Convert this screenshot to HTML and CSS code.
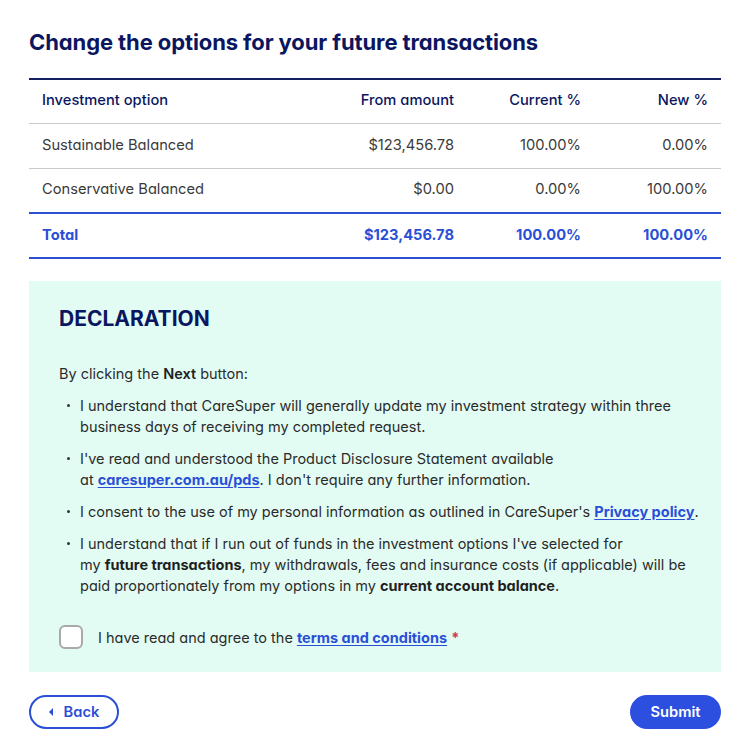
FILE: index.html
```html
<!DOCTYPE html>
<html>
<head>
<meta charset="utf-8">
<link rel="stylesheet" href="styles.css">
</head>
<body>
<div class="page">
  <h1 class="title">Change the options for your future transactions</h1>
  <table class="options">
    <thead>
      <tr>
        <th class="col-name">Investment option</th>
        <th class="num">From amount</th>
        <th class="num">Current %</th>
        <th class="num">New %</th>
      </tr>
    </thead>
    <tbody>
      <tr>
        <td>Sustainable Balanced</td>
        <td class="num">$123,456.78</td>
        <td class="num">100.00%</td>
        <td class="num">0.00%</td>
      </tr>
      <tr>
        <td>Conservative Balanced</td>
        <td class="num">$0.00</td>
        <td class="num">0.00%</td>
        <td class="num">100.00%</td>
      </tr>
    </tbody>
    <tfoot>
      <tr>
        <td>Total</td>
        <td class="num">$123,456.78</td>
        <td class="num">100.00%</td>
        <td class="num">100.00%</td>
      </tr>
    </tfoot>
  </table>

  <section class="declaration">
    <h2 class="decl-title">DECLARATION</h2>
    <p class="intro">By clicking the <strong>Next</strong> button:</p>
    <ul class="points">
      <li>I understand that CareSuper will generally update my investment strategy within three<br>business days of receiving my completed request.</li>
      <li>I've read and understood the Product Disclosure Statement available<br>at <a href="#">caresuper.com.au/pds</a>. I don't require any further information.</li>
      <li>I consent to the use of my personal information as outlined in CareSuper's <a href="#">Privacy policy</a>.</li>
      <li>I understand that if I run out of funds in the investment options I've selected for<br>my <strong>future transactions</strong>, my withdrawals, fees and insurance costs (if applicable) will be<br>paid proportionately from my options in my <strong>current account balance</strong>.</li>
    </ul>
    <label class="agree">
      <span class="box"></span>
      <span class="agree-text">I have read and agree to the <a href="#">terms and conditions</a> <span class="req">*</span></span>
    </label>
  </section>

  <div class="actions">
    <button class="btn btn-back"><span class="tri"></span>Back</button>
    <button class="btn btn-submit">Submit</button>
  </div>
</div>
</body>
</html>
```
FILE: styles.css
```css
* { box-sizing: border-box; }
body {
  margin: 0;
  background: #ffffff;
  font-family: Inter, "Noto Sans", sans-serif;
  font-feature-settings: "cv11" 1;
  color: #2b2b2b;
}
.page {
  padding: 27px 29px 0 29px;
}
.title {
  margin: 0;
  font-size: 22px;
  line-height: 30px;
  font-weight: 700;
  color: #0b1660;
  letter-spacing: -0.1px;
}
.options {
  width: 100%;
  margin-top: 21px;
  border-collapse: collapse;
  font-size: 14.7px;
  border-top: 2px solid #142062;
}
.options th, .options td {
  height: 45px;
  padding: 0 13px;
  text-align: left;
  vertical-align: middle;
}
.options th {
  height: 44px;
  padding-bottom: 2px;
  font-weight: 500;
  color: #0b1660;
  border-bottom: 1px solid #c9c9c9;
}
.options td { color: #3a3a3a; padding-bottom: 2px; }
.options tbody tr td { border-bottom: 1px solid #c9c9c9; }
.options tbody tr:last-child td { border-bottom: 2px solid #2c4fd0; }
.options tfoot td {
  color: #2a4fd6;
  font-weight: 700;
  border-bottom: 2px solid #2c4fd0;
  height: 45px;
}
.options .num { text-align: right; width: 127px; }
.options .col-name { width: auto; }

.declaration {
  margin-top: 22px;
  background: #e2fcf4;
  padding: 24px 30px 23px 30px;
}
.decl-title {
  margin: 0;
  font-size: 21px;
  line-height: 28px;
  font-weight: 700;
  color: #0b1660;
}
.intro {
  margin: 30px 0 0 0;
  font-size: 14.5px;
  line-height: 21px;
}
.intro strong { font-weight: 600; color: #1f1f1f; }
.points {
  list-style: none;
  margin: 11px 0 0 0;
  padding: 0 0 0 21px;
  font-size: 14.5px;
  line-height: 21px;
  white-space: nowrap;
}
.points li {
  position: relative;
  margin-bottom: 11px;
}
.points li:last-child { margin-bottom: 0; }
.points li::before {
  content: "";
  position: absolute;
  left: -13px;
  top: 9px;
  width: 3px;
  height: 3px;
  border-radius: 50%;
  background: #333;
}
.points strong { font-weight: 700; color: #1f1f1f; }
a {
  color: #2a4fd6;
  font-weight: 700;
  text-decoration: underline;
  text-underline-offset: 2px;
}
.agree {
  display: flex;
  align-items: center;
  gap: 15px;
  margin-top: 29px;
  font-size: 14.5px;
}
.box {
  width: 24px;
  height: 24px;
  border: 2px solid #a9a9a9;
  border-radius: 6px;
  background: #fff;
  flex: none;
}
.req { color: #d6355b; font-weight: 700; }

.actions {
  display: flex;
  justify-content: space-between;
  align-items: center;
  margin-top: 23px;
}
.btn {
  font-family: Inter, "Noto Sans", sans-serif;
  font-feature-settings: "cv11" 1;
  height: 34px;
  border-radius: 17px;
  font-size: 14.7px;
  font-weight: 600;
  display: inline-flex;
  align-items: center;
  justify-content: center;
  cursor: pointer;
}
.btn-back {
  width: 90px;
  background: #fff;
  color: #2a4fd6;
  border: 2px solid #2a4fd6;
  gap: 11px;
  padding: 0;
}
.tri {
  width: 0;
  height: 0;
  border-top: 4px solid transparent;
  border-bottom: 4px solid transparent;
  border-right: 4px solid #2a4fd6;
}
.btn-submit {
  width: 91px;
  background: #2c4fe0;
  color: #fff;
  border: none;
}
```
